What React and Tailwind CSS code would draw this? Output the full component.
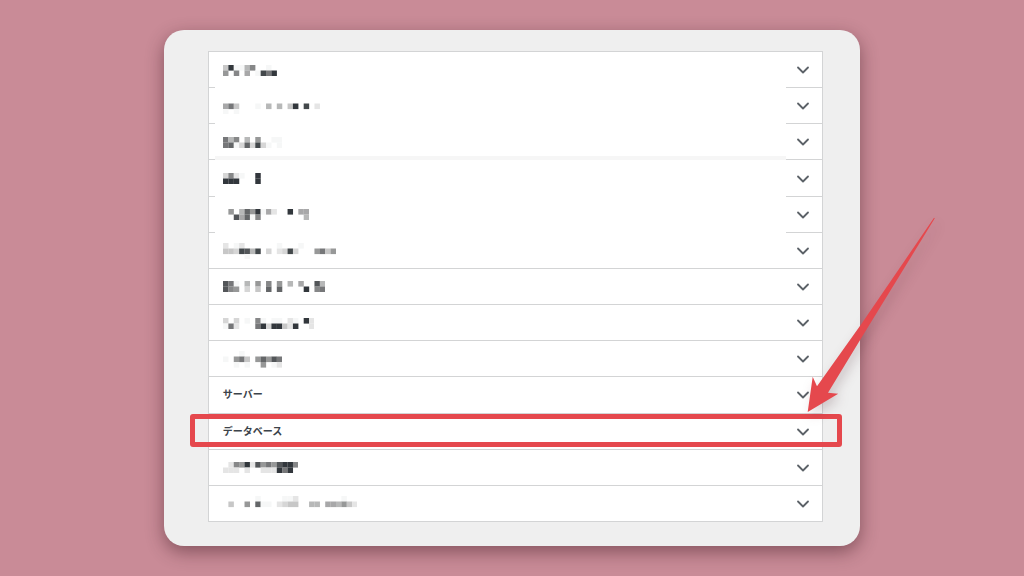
import { ChevronDown } from 'lucide-react'

// Each character is one mosaic cell: a hex grey level, or '.' for an empty cell
const SECTIONS = [
  { id: 'section-1', mosaic: ['c3ffb8..f.', '9.8.a.f473'], divider: 'cut' },
  { id: 'section-2', mosaic: ['..................', 'a7c...f.b.b.c3.4.e', 'f.f...............'], divider: 'cut' },
  { id: 'section-3', mosaic: ['7b8.b.9..ff', '76fd6d4df.f'], divider: 'band' },
  { id: 'section-4', mosaic: ['d8ef..3', '333...3'], divider: 'cut' },
  { id: 'section-5', mosaic: ['.9.b693fae..3.aa', '..5a6f8........b'], divider: 'cut' },
  { id: 'section-6', mosaic: ['e.fe......f...f......', 'ccd45b4.d.ed4d...97c9', '....f................'] },
  { id: 'section-7', mosaic: ['57f.b.9.8.9.b.a..5b', '589.d.c.6.6....3.87'] },
  { id: 'section-8', mosaic: ['d.d.f.8f.ff.ef.3e', 'f7e...73d33ce3..e'] },
  { id: 'section-9', mosaic: ['...f.......', 'f.97c.96957', '..f.f..9.fe'] },
  { id: 'server', label: 'サーバー' },
  { id: 'database', label: 'データベース', highlighted: true },
  { id: 'section-12', mosaic: ['.e893e59795338', 'eee.e..eee373.'] },
  { id: 'section-13', mosaic: ['......f....ffe........f..', '.c..9.6ff.edcc..bb.aab9ce', '.........................'] },
]

const GREYS = {
  3: '#32373c', 4: '#43484b', 5: '#535659', 6: '#646668', 7: '#767779', 8: '#868788', 9: '#979898',
  a: '#a8a8a9', b: '#b7b8b8', c: '#c7c7c7', d: '#d6d6d6', e: '#e5e5e5', f: '#f6f7f7',
}

const CELL_W = 5.38
const CELL_H = 5.5

function Mosaic({ rows }) {
  const width = rows[0].length * CELL_W
  const height = rows.length * CELL_H
  return (
    <svg width={width} height={height} viewBox={`0 0 ${width} ${height}`} aria-hidden="true">
      {rows.map((row, y) =>
        [...row].map((cell, x) =>
          cell === '.' ? null : (
            <rect
              key={`${x}-${y}`}
              x={x * CELL_W}
              y={y * CELL_H}
              width={CELL_W + 0.1}
              height={CELL_H + 0.1}
              fill={GREYS[cell]}
            />
          )
        )
      )}
    </svg>
  )
}

function Divider({ type }) {
  if (!type) return <div className="h-px bg-[#d3d4d5]" />
  return (
    <div className="flex h-px items-end justify-between">
      <span className="h-px w-1.5 bg-[#d3d4d5]" />
      {type === 'band' && <span className="h-1 flex-1 bg-[#f6f6f6]" />}
      <span className="h-px w-9 bg-[#d3d4d5]" />
    </div>
  )
}

function Callout() {
  return (
    <>
      <div className="pointer-events-none absolute top-0 bottom-[3px] -left-[19px] -right-5 z-10 rounded-[3px] border-5 border-[#e5484d]" />
      <svg
        className="pointer-events-none absolute bottom-[34px] -right-[118px] z-10 overflow-visible drop-shadow-[3px_5px_6px_rgba(60,20,30,0.2)]"
        width="140"
        height="205"
        viewBox="800 210 140 205"
        aria-hidden="true"
      >
        <path
          d="M807.7 411L812.7 375.7L817 385.3L861 323.5L934 216.8L934.8 217.3L861 337.5L828 391.8L838.2 392.8Z"
          fill="#e5484d"
        />
      </svg>
    </>
  )
}

function SectionRow({ section }) {
  return (
    <li className="relative flex flex-col">
      <button
        type="button"
        aria-expanded="false"
        aria-label={section.label ?? section.id}
        className="flex w-full flex-1 items-center justify-between pt-px pr-[9px] pl-3.5 text-left text-[10px] leading-4 font-bold text-[#3c434a]"
      >
        {section.label ? <span>{section.label}</span> : <Mosaic rows={section.mosaic} />}
        <ChevronDown size={20} strokeWidth={2.2} className="text-[#5c6268]" />
      </button>
      <Divider type={section.divider} />
      {section.highlighted && <Callout />}
    </li>
  )
}

export default function App() {
  return (
    <div className="min-h-screen overflow-hidden bg-[#c98b97] py-[30px] font-['Liberation_Sans','Noto_Sans_CJK_JP',sans-serif]">
      <main className="mx-auto w-[68%] rounded-[20px] bg-[#efefef] pt-[21px] pr-[37px] pb-6 pl-11 shadow-[0_6px_18px_rgba(50,15,25,0.45)]">
        <ul className="grid min-h-[471px] auto-rows-fr border-x border-t border-[#d3d4d5] bg-white">
          {SECTIONS.map(section => (
            <SectionRow key={section.id} section={section} />
          ))}
        </ul>
      </main>
    </div>
  )
}
